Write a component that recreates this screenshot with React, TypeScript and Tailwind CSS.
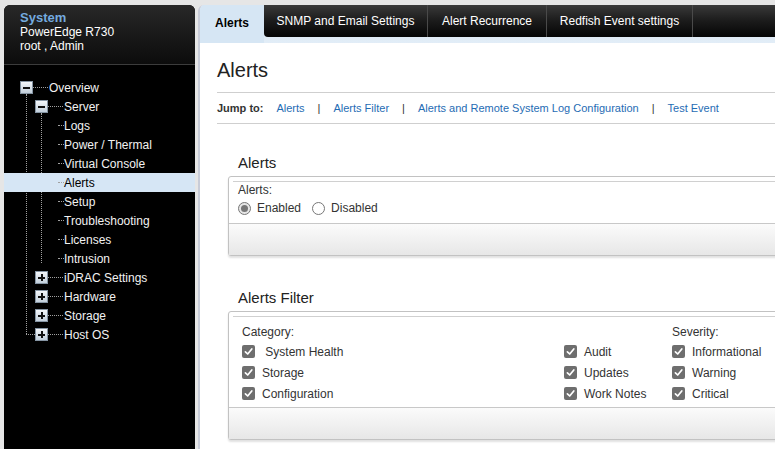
import React from "react";

function Exp({ open }: { open: boolean }) {
  return (
    <div className="relative flex h-[13px] w-[13px] flex-none items-center justify-center border border-[#8594a3] bg-gradient-to-b from-[#f4f7fa] to-[#c2cfdb]">
      <div className="h-[2px] w-[7px] bg-[#111]" />
      {!open && <div className="absolute h-[7px] w-[2px] bg-[#111]" />}
    </div>
  );
}

function Stub({ w }: { w: number }) {
  return (
    <div
      className="h-0 flex-none border-t border-dotted border-[#a0a0a0]"
      style={{ width: w }}
    />
  );
}

const leaves = [
  "Logs",
  "Power / Thermal",
  "Virtual Console",
  "Alerts",
  "Setup",
  "Troubleshooting",
  "Licenses",
  "Intrusion",
];

const closed = ["iDRAC Settings", "Hardware", "Storage", "Host OS"];

function Check() {
  return (
    <span className="flex h-[13px] w-[13px] flex-none items-center justify-center rounded-[2px] bg-[#6e6e6e]">
      <svg width="9" height="9" viewBox="0 0 9 9">
        <path d="M1.4 4.8 L3.7 7 L7.8 2" fill="none" stroke="#fff" strokeWidth="1.7" strokeLinecap="round" strokeLinejoin="round" />
      </svg>
    </span>
  );
}

function CheckItem({ label }: { label: string }) {
  return (
    <div className="flex h-[21px] items-center gap-[7px]">
      <Check />
      <span className="whitespace-pre">{label}</span>
    </div>
  );
}

function Box({ children }: { children: React.ReactNode }) {
  return (
    <div className="w-[560px] rounded-[3px] border border-[#c2c2c2] bg-white shadow-[0_2px_2px_rgba(0,0,0,0.12)]">
      <div className="pl-[4px] pt-[4px]">
        <div className="border-t border-[#d0d0d0]" />
      </div>
      {children}
      <div className="h-[32px] border-t border-[#c8c8c8] bg-gradient-to-b from-[#fbfbfb] to-[#e7e7e7]" />
    </div>
  );
}

export default function App() {
  return (
    <div className="flex h-[449px] w-[775px] overflow-hidden bg-[#e6e6e6] font-['Liberation_Sans',Arial,sans-serif]">
      {/* Sidebar */}
      <div className="relative ml-[4px] mt-[5px] flex w-[191px] flex-none flex-col overflow-hidden rounded-t-[6px] bg-black">
        <div className="h-[60px] flex-none border-b border-[#3c3c3c] bg-gradient-to-b from-[#282828] to-[#0c0c0c] pl-[16px] pt-[5px]">
          <div className="text-[13px] font-bold leading-[15px] text-[#74aadf]">System</div>
          <div className="text-[12px] leading-[14px] text-white">PowerEdge R730</div>
          <div className="text-[12px] leading-[14px] text-white">root , Admin</div>
        </div>
        {/* vertical dotted lines */}
        <div className="absolute left-[22px] top-[89px] h-[240px] border-l border-dotted border-[#a0a0a0]" />
        <div className="absolute left-[37px] top-[108px] h-[150px] border-l border-dotted border-[#a0a0a0]" />
        <div className="relative pt-[13px] text-[12px] text-[#f2f2f2]">
          <div className="flex h-[19px] items-center pl-[16px]">
            <Exp open />
            <Stub w={15} />
            <span className="ml-[1px]">Overview</span>
          </div>
          <div className="flex h-[19px] items-center pl-[31px]">
            <Exp open />
            <Stub w={15} />
            <span className="ml-[1px]">Server</span>
          </div>
          {leaves.map((l) => (
            <div
              key={l}
              className={
                l === "Alerts"
                  ? "relative z-10 flex h-[19px] items-center bg-[#d6e6f5] pl-[54px] text-black"
                  : "flex h-[19px] items-center pl-[54px]"
              }
            >
              <Stub w={6} />
              <span>{l}</span>
            </div>
          ))}
          {closed.map((l, i) => (
            <div
              key={l}
              className={
                i === closed.length - 1
                  ? "flex h-[19px] items-center pl-[22px]"
                  : "flex h-[19px] items-center pl-[31px]"
              }
            >
              {i === closed.length - 1 && <Stub w={9} />}
              <Exp open={false} />
              <Stub w={15} />
              <span className="ml-[1px]">{l}</span>
            </div>
          ))}
        </div>
      </div>

      {/* Content */}
      <div className="ml-[3px] mt-[5px] flex min-w-0 flex-1 flex-col overflow-hidden rounded-tl-[6px] border-l-2 border-[#c8ccd8] bg-white">
        <div className="flex h-[38px] flex-none bg-gradient-to-b from-[#d3e3f2] to-[#e2edf7]">
          <div className="flex h-[38px] w-[64px] flex-none items-start justify-center bg-[#d6e6f4] pt-[9px] text-[12px] font-bold text-black">
            Alerts
          </div>
          <div className="flex h-[32px] flex-1 rounded-bl-[4px] bg-gradient-to-b from-[#3a3a3a] via-[#1b1b1b] to-[#060606] text-[12px] text-white">
            <div className="flex w-[164px] items-center justify-center border-r border-[#4a4a4a]">SNMP and Email Settings</div>
            <div className="flex w-[119px] items-center justify-center border-r border-[#4a4a4a]">Alert Recurrence</div>
            <div className="flex w-[146px] items-center justify-center border-r border-[#4a4a4a]">Redfish Event settings</div>
          </div>
        </div>

        <div className="flex-1 pl-[17px]">
          <div className="border-b border-[#cfcfcf] pb-[10px] pt-[15px] text-[20px] leading-[24px] text-[#222]">Alerts</div>
          <div className="flex h-[31px] items-center gap-[13px] border-b border-[#cfcfcf] text-[11px]">
            <span className="font-bold text-[#333]">Jump to:</span>
            <span className="text-[#1f6cb4]">Alerts</span>
            <span className="text-[#333]">|</span>
            <span className="text-[#1f6cb4]">Alerts Filter</span>
            <span className="text-[#333]">|</span>
            <span className="text-[#1f6cb4]">Alerts and Remote System Log Configuration</span>
            <span className="text-[#333]">|</span>
            <span className="text-[#1f6cb4]">Test Event</span>
          </div>

          <div className="ml-[11px] text-[12px] text-[#333]">
            <div className="mb-[4px] mt-[30px] pl-[10px] text-[15px] leading-[18px] text-[#222]">Alerts</div>
            <Box>
              <div className="pb-[6px] pl-[9px] pt-[1px]">
                <div className="leading-[14px]">Alerts:</div>
                <div className="mt-[2px] flex h-[18px] items-center">
                  <span className="flex h-[13px] w-[13px] items-center justify-center rounded-full border border-[#777] bg-[#e6e6e6]">
                    <span className="h-[7px] w-[7px] rounded-full bg-[#777]" />
                  </span>
                  <span className="ml-[6px]">Enabled</span>
                  <span className="ml-[11px] h-[13px] w-[13px] rounded-full border border-[#777] bg-white" />
                  <span className="ml-[6px]">Disabled</span>
                </div>
              </div>
            </Box>

            <div className="mb-[4px] mt-[33px] pl-[10px] text-[15px] leading-[18px] text-[#222]">Alerts Filter</div>
            <Box>
              <div className="flex pb-[3px] pl-[13px] pt-[8px]">
                <div className="w-[322px]">
                  <div className="mb-[2px] leading-[14px]">Category:</div>
                  <CheckItem label=" System Health" />
                  <CheckItem label="Storage" />
                  <CheckItem label="Configuration" />
                </div>
                <div className="w-[108px]">
                  <div className="mb-[2px] h-[14px]" />
                  <CheckItem label="Audit" />
                  <CheckItem label="Updates" />
                  <CheckItem label="Work Notes" />
                </div>
                <div className="flex-1">
                  <div className="mb-[2px] leading-[14px]">Severity:</div>
                  <CheckItem label="Informational" />
                  <CheckItem label="Warning" />
                  <CheckItem label="Critical" />
                </div>
              </div>
            </Box>
          </div>
        </div>
      </div>
    </div>
  );
}
